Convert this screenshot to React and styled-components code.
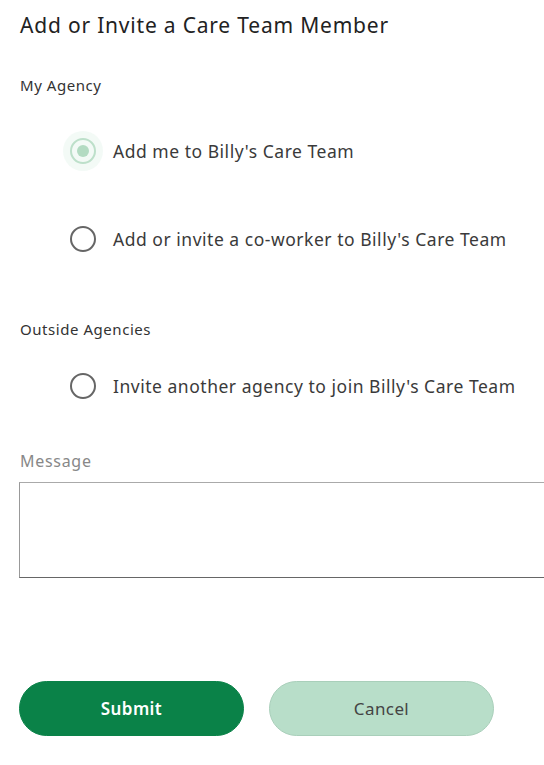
import React, { useState } from "react";
import styled, { createGlobalStyle } from "styled-components";

const Global = createGlobalStyle`
  html, body { margin: 0; padding: 0; background: #fff; overflow: hidden; }
  body { font-family: "Noto Sans", Inter, sans-serif; color: #333; }
  * { box-sizing: border-box; }
`;

const Page = styled.div`
  width: 544px;
  height: 765px;
  overflow: hidden;
  padding: 10px 0 0 20px;
  display: flex;
  flex-direction: column;
`;

const Title = styled.h1`
  margin: 0;
  font-size: 21px;
  font-weight: 400;
  line-height: 30px;
  color: #222;
  letter-spacing: 0.8px;
`;

const SectionLabel = styled.div`
  font-size: 15px;
  line-height: 20px;
  color: #333;
  letter-spacing: 0.55px;
  margin-top: ${(p) => p.$mt}px;
`;

const OptionList = styled.div`
  display: flex;
  flex-direction: column;
  gap: ${(p) => p.$gap}px;
  margin-top: ${(p) => p.$mt}px;
  padding-left: 50px;
`;

const Option = styled.label`
  display: flex;
  align-items: center;
  gap: 17px;
  height: 30px;
  cursor: pointer;
`;

const RadioOuter = styled.span`
  position: relative;
  width: 26px;
  height: 26px;
  border-radius: 50%;
  border: 2px solid ${(p) => (p.$checked ? "#bfe0cb" : "#666")};
  display: flex;
  align-items: center;
  justify-content: center;
  flex: none;
  &::before {
    content: "";
    display: ${(p) => (p.$checked ? "block" : "none")};
    position: absolute;
    left: -9px;
    top: -9px;
    width: 40px;
    height: 40px;
    border-radius: 50%;
    background: rgba(180, 224, 196, 0.16);
  }
`;

const RadioDot = styled.span`
  width: 12px;
  height: 12px;
  border-radius: 50%;
  background: #b3dbc2;
`;

const OptionText = styled.span`
  font-size: 17.5px;
  color: #3a3a3a;
  letter-spacing: 0.52px;
`;

const MessageLabel = styled.div`
  margin-top: 50px;
  font-size: 16px;
  line-height: 20px;
  color: #888;
  letter-spacing: 0.7px;
`;

const TextArea = styled.textarea`
  display: block;
  flex: none;
  margin: 11px 0 0 -1px;
  width: 560px;
  height: 96px;
  border: 1px solid #999;
  border-top-color: #aaa;
  border-bottom-color: #666;
  border-radius: 0;
  resize: none;
  font: inherit;
  outline: none;
`;

const Buttons = styled.div`
  display: flex;
  gap: 25px;
  margin-top: 103px;
  margin-left: -1px;
`;

const Button = styled.button`
  width: 225px;
  height: 55px;
  border-radius: 28px;
  font-family: inherit;
  font-size: 17px;
  letter-spacing: 0.4px;
  cursor: pointer;
  border: 1px solid ${(p) => (p.$primary ? "#0a8248" : "#a9cfba")};
  background: ${(p) => (p.$primary ? "#0a8248" : "#b8dec9")};
  color: ${(p) => (p.$primary ? "#fff" : "#444")};
  font-weight: ${(p) => (p.$primary ? 600 : 400)};
`;

function Radio({ checked, label, onSelect }) {
  return (
    <Option onClick={onSelect}>
      <RadioOuter $checked={checked}>{checked && <RadioDot />}</RadioOuter>
      <OptionText>{label}</OptionText>
    </Option>
  );
}

export default function App() {
  const [sel, setSel] = useState("me");
  return (
    <>
      <Global />
      <Page>
        <Title>Add or Invite a Care Team Member</Title>
        <SectionLabel $mt={35}>My Agency</SectionLabel>
        <OptionList $gap={58} $mt={41}>
          <Radio checked={sel === "me"} label="Add me to Billy's Care Team" onSelect={() => setSel("me")} />
          <Radio checked={sel === "co"} label="Add or invite a co-worker to Billy's Care Team" onSelect={() => setSel("co")} />
        </OptionList>
        <SectionLabel $mt={65}>Outside Agencies</SectionLabel>
        <OptionList $gap={58} $mt={32}>
          <Radio checked={sel === "ag"} label="Invite another agency to join Billy's Care Team" onSelect={() => setSel("ag")} />
        </OptionList>
        <MessageLabel>Message</MessageLabel>
        <TextArea />
        <Buttons>
          <Button $primary>Submit</Button>
          <Button>Cancel</Button>
        </Buttons>
      </Page>
    </>
  );
}
